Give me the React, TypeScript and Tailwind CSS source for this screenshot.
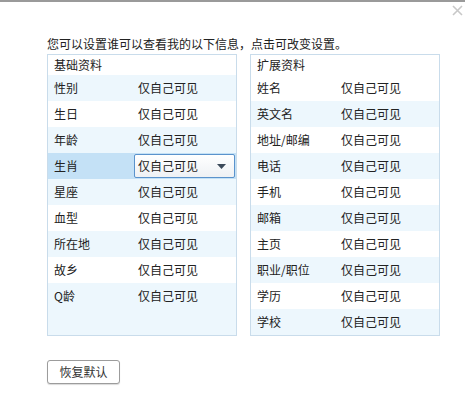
import * as React from "react";

const basic = ["性别", "生日", "年龄", "生肖", "星座", "血型", "所在地", "故乡", "Q龄"];
const extended = ["姓名", "英文名", "地址/邮编", "电话", "手机", "邮箱", "主页", "职业/职位", "学历", "学校"];

function Row({ label, shaded, selected }: { label: string; shaded: boolean; selected?: boolean }) {
  return (
    <div
      className={
        "flex items-center h-[26px] pl-[6px] " +
        (selected ? "bg-[#c4e1f6]" : shaded ? "bg-[#edf7fd]" : "bg-white")
      }
    >
      <span className="w-[84px] shrink-0">{label}</span>
      {selected ? (
        <div className="-ml-[4px] flex items-center justify-between h-[24px] w-[101px] pl-[3px] pr-[8px] border border-[#5b93cc] rounded-[2px] bg-gradient-to-b from-white to-[#eef1f4]">
          <span>仅自己可见</span>
          <svg width="9" height="5" viewBox="0 0 9 5" aria-hidden>
            <path d="M0 0h9L4.5 5z" fill="#3c4a5a" />
          </svg>
        </div>
      ) : (
        <span>仅自己可见</span>
      )}
    </div>
  );
}

function Panel({ title, children, fill }: { title: string; children: React.ReactNode; fill?: string }) {
  return (
    <div className="w-[190px] h-[282px] border border-[#c9dceb] flex flex-col">
      <div className="h-[20px] flex items-center pl-[6px] bg-white">{title}</div>
      {children}
      <div className={"flex-1 " + (fill ?? "bg-white")} />
    </div>
  );
}

export default function App() {
  return (
    <div className="relative w-[465px] h-[419px] bg-white text-[12px] text-[#222] font-['Noto_Sans_CJK_SC','Noto_Sans',sans-serif]">
      <div className="h-[2px] bg-[#9a9a9a]" />
      <button type="button" className="absolute top-[5px] right-[2px] text-[#c8c8c8]" aria-label="close">
        <svg width="11" height="11" viewBox="0 0 11 11" aria-hidden>
          <path d="M1 1l9 9M10 1l-9 9" stroke="currentColor" strokeWidth="1.6" />
        </svg>
      </button>

      <div className="pl-[47px] pt-[32px]">
        <p className="h-[20px] leading-[20px]">您可以设置谁可以查看我的以下信息，点击可改变设置。</p>

        <div className="flex gap-[13px]">
          <Panel title="基础资料" fill="bg-[#edf7fd]">
            {basic.map((l, i) => (
              <Row key={l} label={l} shaded={i % 2 === 0} selected={l === "生肖"} />
            ))}
          </Panel>
          <Panel title="扩展资料">
            {extended.map((l, i) => (
              <Row key={l} label={l} shaded={i % 2 === 1} />
            ))}
          </Panel>
        </div>

        <button
          type="button"
          className="mt-[24px] w-[73px] h-[24px] rounded-[3px] border border-[#9c9c9c] bg-white text-[12px] text-[#333] shadow-[0_1px_1px_rgba(0,0,0,0.15)]"
        >
          恢复默认
        </button>
      </div>
    </div>
  );
}
